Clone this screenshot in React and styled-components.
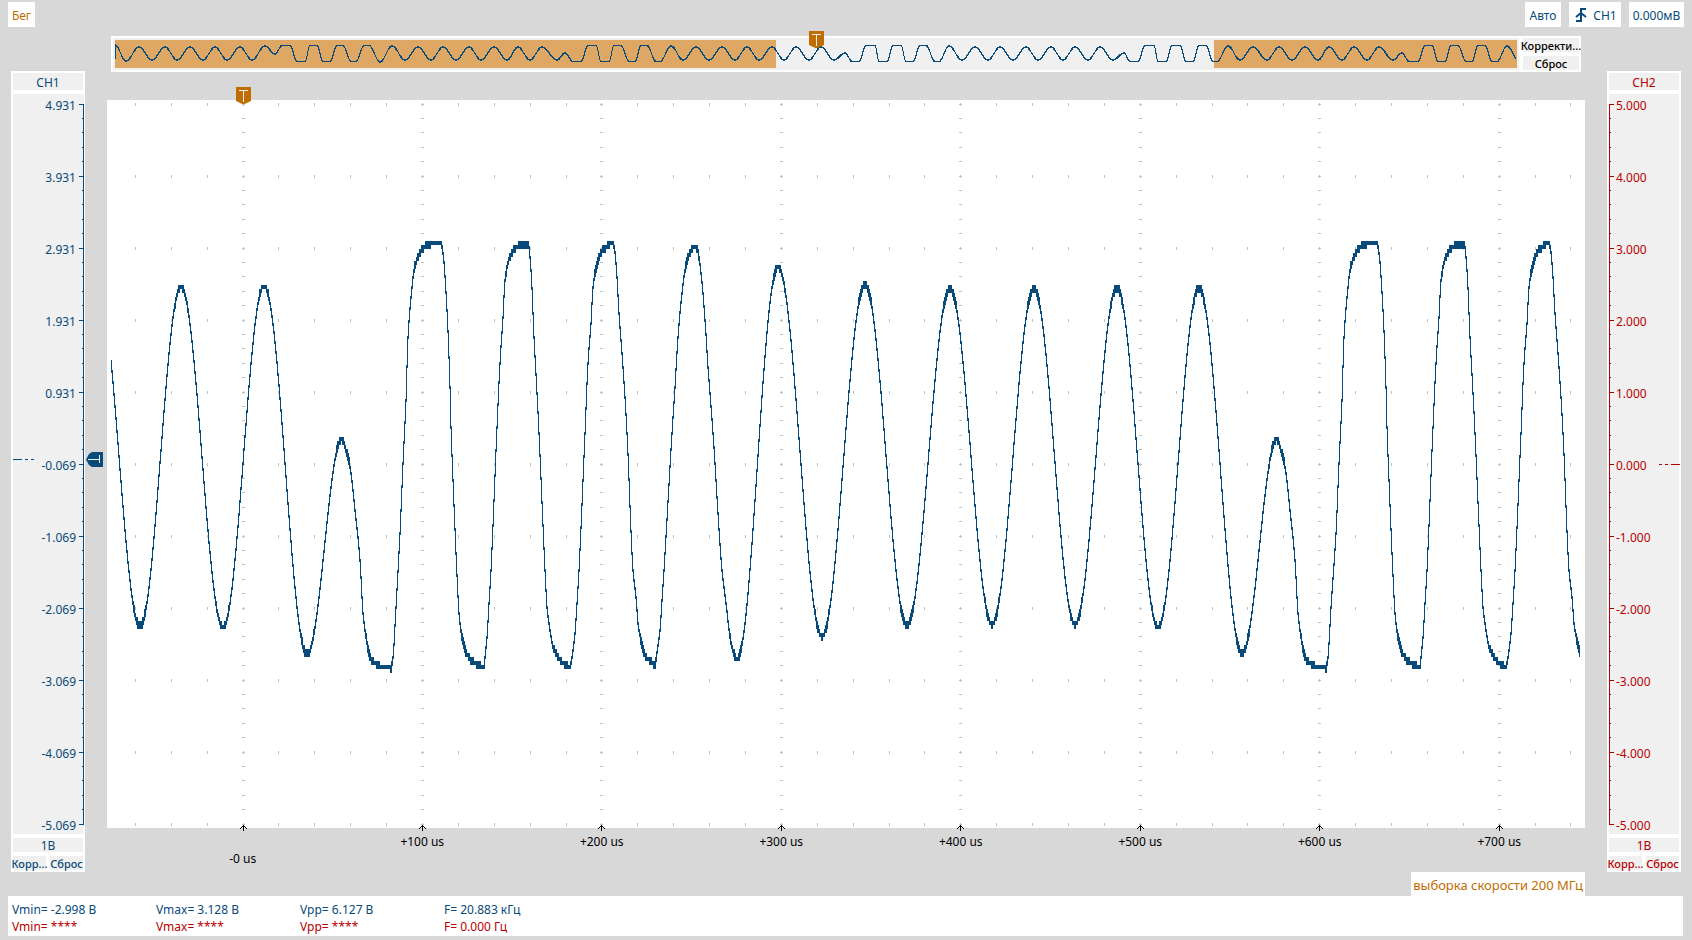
import React from "react";
import styled, { createGlobalStyle } from "styled-components";

const BLUE = "#084a7a";
const RED = "#b80000";
const ORANGE = "#bf6c00";

const GlobalStyle = createGlobalStyle`
  *, *::before, *::after { box-sizing: border-box; }
  body {
    margin: 0;
    background: #d8d8d8;
    font-family: "Noto Sans", "Open Sans", sans-serif;
    font-size: 12px;
    line-height: 16px;
    color: #000;
  }
  button { font: inherit; border: 0; padding: 0; cursor: pointer; }
`;

const Page = styled.div`
  min-height: 100vh;
  padding: 2px 8px 4px;
`;

const TopBar = styled.header`
  display: flex;
  justify-content: space-between;
  height: 25px;
`;

const TriggerGroup = styled.div`
  display: flex;
  gap: 8px;
`;

const StatusButton = styled.button`
  display: flex;
  align-items: center;
  justify-content: center;
  gap: 5px;
  min-width: ${(p) => p.$width}px;
  height: 25px;
  padding: 2px 2px 0;
  background: #fff;
  color: ${(p) => p.$color || BLUE};
`;

const Workspace = styled.main`
  display: grid;
  grid-template-columns: 74px minmax(0, 1fr) 74px;
  column-gap: 22px;
  padding: 9px 3px 0;
`;

const ChannelPanel = styled.section`
  position: relative;
  display: flex;
  flex-direction: column;
  gap: 4px;
  margin: 35px 0 24px;
  padding: 2px;
  background: #fff;
  color: ${(p) => p.$color};
`;

const PanelButton = styled.button`
  flex: ${(p) => (p.$fill ? "1 1 0" : "none")};
  min-width: 0;
  height: ${(p) => p.$height}px;
  padding-top: 2px;
  display: flex;
  align-items: center;
  justify-content: center;
  background: #f0f0f0;
  color: inherit;
  white-space: nowrap;
  font-size: ${(p) => (p.$small ? 11 : 12)}px;
  font-weight: ${(p) => (p.$small ? 500 : 400)};
`;

const ButtonPair = styled.div`
  display: flex;
  gap: 4px;
`;

const Scale = styled.div`
  display: flex;
  flex-direction: ${(p) => (p.$mirrored ? "row-reverse" : "row")};
  justify-content: flex-end;
  gap: ${(p) => (p.$mirrored ? 2 : 3)}px;
  height: 740px;
  margin-right: ${(p) => (p.$mirrored ? 0 : -1)}px;
  background: #f0f0f0;
`;

const ScaleLabels = styled.ol`
  display: flex;
  flex-direction: column;
  justify-content: space-between;
  margin: 0;
  padding: 4px 0 0;
  list-style: none;
  text-align: ${(p) => (p.$mirrored ? "left" : "right")};
`;

const ScaleTicks = styled.svg`
  flex: none;
  width: 5px;
  height: 740px;
  transform: ${(p) => (p.$mirrored ? "scaleX(-1)" : "none")};
`;

const ZeroDash = styled.svg`
  position: absolute;
  top: ${(p) => p.$top}px;
  left: ${(p) => (p.$mirrored ? "auto" : "2px")};
  right: ${(p) => (p.$mirrored ? "1px" : "auto")};
  width: 21px;
  height: 1px;
  transform: ${(p) => (p.$mirrored ? "scaleX(-1)" : "none")};
`;

const LevelHandle = styled.svg`
  position: absolute;
  top: 381px;
  left: 75px;
  width: 17px;
  height: 15px;
`;

const Center = styled.section`
  min-width: 0;
`;

const Overview = styled.div`
  display: flex;
  gap: 4px;
  height: 36px;
  margin: 0 4px 28px;
  padding: 2px;
  background: #fff;
`;

const OverviewTrack = styled.div`
  position: relative;
  flex: 1;
  min-width: 0;
  background: #f0f0f0;
`;

const OverviewChart = styled.svg`
  display: block;
  width: 100%;
  height: 32px;
`;

const OverviewButtons = styled.div`
  display: flex;
  flex-direction: column;
  justify-content: space-between;
  width: 56px;
`;

const Flag = styled.svg`
  position: absolute;
  top: ${(p) => p.$top}px;
  left: ${(p) => p.$left}%;
  width: 15px;
  height: 17px;
  margin-left: -7px;
`;

const Plot = styled.div`
  position: relative;
  height: 728px;
  background: #fff;
`;

const PlotChart = styled.svg`
  display: block;
  width: 100%;
  height: 728px;
  overflow: visible;
`;

const TimeAxis = styled.ol`
  display: grid;
  grid-template-columns: 460fr repeat(8, 1795fr);
  height: 44px;
  margin: 0 -4px 0 0;
  padding: 6px 0 5px;
  list-style: none;
  text-align: center;
`;

const TimeLabel = styled.li`
  grid-column: ${(p) => p.$column};
  grid-row: 1;
  align-self: ${(p) => (p.$low ? "end" : "start")};
`;

const SampleRate = styled.div`
  width: fit-content;
  height: 24px;
  margin-left: auto;
  padding: 0 2px;
  background: #fff;
  color: ${ORANGE};
  font-size: 13px;
  line-height: 27px;
`;

const Measurements = styled.table`
  display: block;
  height: 40px;
  margin-right: 1px;
  padding: 5px 4px 0;
  border-spacing: 0;
  background: #fff;
`;

const MeasureRow = styled.tr`
  color: ${(p) => p.$color};
`;

const MeasureCell = styled.td`
  width: 144px;
  min-width: 144px;
  padding: 0;
  line-height: 17px;
`;

/* Signal knots: [x, y, traced]. Plain knots are joined by half a cosine, traced ones by a monotone cubic. */
const line = (pairs) => pairs.map(([x, y]) => [x, y, true]);

const LEAD = [[98, 287], [140, 626], [181, 287], [223, 627], [264, 286], [307, 654]];

const BURST = [
  [342, 439],
  ...line([
    [346, 450], [350, 467], [355, 510], [360, 560], [363, 613], [367, 643], [371, 659], [377, 664], [382, 667], [391, 668],
    [393, 657], [396, 607], [400, 533], [403, 463], [406, 400], [408, 337], [412, 287], [414, 270], [418, 257],
    [422, 249], [428, 245], [434, 243], [441, 243], [443, 253], [447, 310], [450, 387], [451, 427], [454, 505], [457, 575],
    [459, 613], [462, 637], [466, 652], [472, 661], [479, 665], [484, 667], [485, 657], [487, 637], [489, 603], [491, 570],
    [497, 427], [500, 363], [503, 317], [505, 280], [508, 262], [513, 251], [517, 247], [523, 244], [528, 244],
    [531, 270], [534, 337], [537, 393], [539, 433], [545, 570], [547, 607], [550, 630], [553, 647], [558, 657],
    [562, 662], [566, 665], [570, 667], [572, 657], [575, 633], [577, 603], [579, 570],
    [585, 433], [588, 363], [591, 323], [593, 287], [597, 265], [600, 254], [605, 248], [612, 243], [614, 246],
    [616, 263], [619, 313], [623, 367], [627, 433], [633, 570], [636, 597], [638, 623], [642, 645], [646, 657],
    [653, 663], [655, 665], [657, 652], [660, 630], [662, 600], [664, 570],
  ]),
];

const MIDDLE = [
  ...line([
    [672, 433], [675, 387], [678, 337], [682, 293], [685, 270], [688, 257], [695, 246], [697, 248], [701, 273],
    [705, 320], [708, 367], [713, 433], [722, 570], [726, 603], [730, 637], [733, 651], [737, 659],
  ]),
  [778, 267], [822, 636], [865, 285], [907, 625], [950, 289], [992, 624], [1034, 289],
  [1075, 624], [1117, 288], [1158, 627], [1199, 288], [1242, 653],
];

const PERIOD = 936;
const SIGNAL = [...LEAD, ...BURST, ...MIDDLE, ...BURST.map(([x, y, s]) => [x + PERIOD - (x < 400 ? 1 : 0), y, s])];

function slopes(knots) {
  const secant = (i) => (knots[i + 1][1] - knots[i][1]) / (knots[i + 1][0] - knots[i][0]);
  return knots.map((k, i) => {
    if (i === 0 || i === knots.length - 1) return 0;
    const a = secant(i - 1);
    const b = secant(i);
    return a * b <= 0 ? 0 : (2 * a * b) / (a + b);
  });
}

function sampler(knots) {
  const m = slopes(knots);
  return (x) => {
    let i = 1;
    while (i < knots.length - 1 && knots[i][0] < x) i += 1;
    const [x0, y0] = knots[i - 1];
    const [x1, y1, traced] = knots[i];
    const h = x1 - x0;
    const t = Math.min(1, Math.max(0, (x - x0) / h));
    if (!traced) return y0 + ((y1 - y0) * (1 - Math.cos(Math.PI * t))) / 2;
    const u = 1 - t;
    return (1 + 2 * t) * u * u * y0 + t * u * u * h * m[i - 1] + t * t * (3 - 2 * t) * y1 - t * t * u * h * m[i];
  };
}

/* One vertical bar per pixel column, snapped to the converter's steps. */
function columns(knots, from, to, step, noise) {
  const at = sampler(knots);
  let d = "";
  for (let x = from; x < to; x += 1) {
    const a = at(x);
    const b = at(x + 1);
    const steep = Math.abs(a - b) > step * 1.5;
    const n = steep ? noise / 2 : noise;
    const top = Math.min(a, b) - n;
    const bottom = Math.max(a, b) + n;
    const y0 = steep ? Math.round(top) : Math.round((top - 1) / step) * step + 1;
    const y1 = steep ? Math.round(bottom) : Math.round((bottom - 1) / step) * step + 1;
    d += `M${x} ${y0}h1V${Math.max(y1, y0 + 1)}h-1z`;
  }
  return d;
}

const hi = 45.5;
const lo = 61.5;
const flat = (y, pairs) => pairs.flatMap(([a, b]) => [[a, y], [b, y, true]]);
const swing = (xs, first, other) => xs.map((x, i) => [x, i % 2 ? other : first]);

const OVERVIEW = [
  [115, 45], [126, 61], ...swing([139, 152, 165, 177, 190, 203, 215, 227, 240, 252], 47, 60), [265, 46], [275, 54],
  ...flat(hi, [[282, 290]]), ...flat(lo, [[297, 305]]), ...flat(hi, [[310, 317]]), ...flat(lo, [[323, 330]]),
  ...flat(hi, [[337, 343]]), ...flat(lo, [[351, 356]]), ...flat(hi, [[364, 369]]), [380, 62], [392, 46],
  ...swing([405, 418, 431, 443, 456, 469, 481, 494, 507, 518, 530, 542], 60, 47), [557, 60], [565, 53],
  ...flat(lo, [[573, 581]]), ...flat(hi, [[588, 596]]), ...flat(lo, [[601, 609]]), ...flat(hi, [[614, 621]]),
  ...flat(lo, [[629, 635]]), ...flat(hi, [[641, 647]]), ...flat(lo, [[656, 660]]), [671, 46],
  ...swing([683, 696, 709, 722, 735, 747, 759, 772, 784, 796, 809, 821, 834], 60, 47), [845, 53],
  ...flat(lo, [[852, 859]]), ...flat(hi, [[866, 875]]), ...flat(lo, [[879, 887]]), ...flat(hi, [[893, 901]]),
  ...flat(lo, [[906, 913]]), ...flat(hi, [[920, 926]]), ...flat(lo, [[935, 939]]), [949, 46],
  ...swing([962, 975, 988, 1000, 1013, 1026, 1038, 1051, 1063, 1075, 1088, 1100, 1113], 60, 47), [1124, 53],
  ...flat(lo, [[1130, 1138]]), ...flat(hi, [[1145, 1154]]), ...flat(lo, [[1158, 1166]]), ...flat(hi, [[1172, 1180]]),
  ...flat(lo, [[1186, 1193]]), ...flat(hi, [[1199, 1206]]), ...flat(lo, [[1213, 1217]]), [1228, 46],
  ...swing([1240, 1253, 1267, 1279, 1292, 1305, 1318, 1329, 1342, 1354, 1367, 1379, 1393], 60, 47), [1402, 53],
  ...flat(lo, [[1409, 1418]]), ...flat(hi, [[1425, 1432]]), ...flat(lo, [[1438, 1445]]), ...flat(hi, [[1451, 1458]]),
  ...flat(lo, [[1466, 1472]]), ...flat(hi, [[1478, 1485]]), ...flat(lo, [[1492, 1497]]), [1507, 46], [1519, 61],
];

const WAVE_PATH = columns(SIGNAL, 111, 1580, 4, 3);
const OVERVIEW_PATH = `M115 45h1v14h-1z${columns(OVERVIEW, 115, 1516, 1, 0.6)}`;

const MAJOR_X = Array.from({ length: 8 }, (_, i) => Math.floor(243 + i * 179.45));
const MINOR_X = Array.from({ length: 41 }, (_, i) => i - 3)
  .filter((i) => i % 5 !== 0 && i < 38)
  .map((i) => Math.floor(243 + i * 35.89));

function gridPath() {
  let d = "";
  for (let r = 0; r <= 10; r += 1) {
    const y = 104 + r * 72;
    MINOR_X.forEach((x) => { d += `M${x} ${y - 1}h1v3h-1z`; });
    MAJOR_X.forEach((x) => {
      d += `M${x} ${y - 1}h1v3h-1zM${x - 1} ${y}h3v1h-3z`;
      if (r < 10) [14, 28, 43, 57].forEach((s) => { d += `M${x - 1} ${y + s}h3v1h-3z`; });
    });
  }
  return d;
}

const GRID_PATH = gridPath();
const ARROW_PATH = MAJOR_X.map((x) => `M${x} 825h1v6h-1zM${x - 1} 826h3v1h-3zM${x - 2} 827h1v1h-1zM${x + 2} 827h1v1h-1zM${x - 3} 828h1v1h-1zM${x + 3} 828h1v1h-1z`).join("");

function ticksPath() {
  let d = "M4 10h1v721h-1z";
  for (let r = 0; r <= 10; r += 1) {
    const y = 10 + r * 72;
    d += `M0 ${y}h5v1h-5z`;
    if (r < 10) [14, 28, 43, 57].forEach((s) => { d += `M3 ${y + s}h1v1h-1z`; });
  }
  return d;
}

const TICKS_PATH = ticksPath();

function TriggerFlag({ top, left }) {
  return (
    <Flag $top={top} $left={left} viewBox="0 0 15 17" aria-hidden="true">
      <path d="M0 0h15v14l-7.500 3.500L0 14z" fill={ORANGE} />
      <path d="M3 3h9v1H3zM7 3h1v12H7z" fill="#f0f0f0" shapeRendering="crispEdges" />
    </Flag>
  );
}

function Channel({ name, color, labels, mirrored, dashTop, children }) {
  return (
    <ChannelPanel $color={color} aria-label={name}>
      <PanelButton $height={17}>{name}</PanelButton>
      <Scale $mirrored={mirrored}>
        <ScaleLabels $mirrored={mirrored}>
          {labels.map((l) => <li key={l}>{l}</li>)}
        </ScaleLabels>
        <ScaleTicks $mirrored={mirrored} viewBox="0 0 5 740" shapeRendering="crispEdges" aria-hidden="true">
          <path d={TICKS_PATH} fill={color} />
        </ScaleTicks>
      </Scale>
      <PanelButton $height={14}>1В</PanelButton>
      <ButtonPair>
        <PanelButton $height={14} $fill $small>Корр...</PanelButton>
        <PanelButton $height={14} $fill $small>Сброс</PanelButton>
      </ButtonPair>
      <ZeroDash $top={dashTop} $mirrored={mirrored} viewBox="0 0 21 1" shapeRendering="crispEdges" aria-hidden="true">
        <path d="M0 0h9v1H0zM12 0h3v1h-3zM18 0h3v1h-3z" fill={color} />
      </ZeroDash>
      {children}
    </ChannelPanel>
  );
}

const CH1_LABELS = ["4.931", "3.931", "2.931", "1.931", "0.931", "-0.069", "-1.069", "-2.069", "-3.069", "-4.069", "-5.069"];
const CH2_LABELS = ["5.000", "4.000", "3.000", "2.000", "1.000", "0.000", "-1.000", "-2.000", "-3.000", "-4.000", "-5.000"];
const TIMES = ["-0 us", "+100 us", "+200 us", "+300 us", "+400 us", "+500 us", "+600 us", "+700 us"];
const MEASURES = [
  { color: BLUE, values: ["Vmin= -2.998 В", "Vmax= 3.128 В", "Vpp= 6.127 В", "F= 20.883 кГц"] },
  { color: RED, values: ["Vmin= ****", "Vmax= ****", "Vpp= ****", "F= 0.000 Гц"] },
];

export default function App() {
  return (
    <>
      <GlobalStyle />
      <Page>
        <TopBar>
          <StatusButton $width={27} $color={ORANGE}>Бег</StatusButton>
          <TriggerGroup>
            <StatusButton $width={36}>Авто</StatusButton>
            <StatusButton $width={52}>
              <svg width="15" height="15" viewBox="0 0 15 15" aria-hidden="true">
                <path d="M3 13H8V1H13M3 9L8 5L13 9" fill="none" stroke={BLUE} strokeWidth="2" />
              </svg>
              CH1
            </StatusButton>
            <StatusButton $width={55}>0.000мВ</StatusButton>
          </TriggerGroup>
        </TopBar>

        <Workspace>
          <Channel name="CH1" color={BLUE} labels={CH1_LABELS} dashTop={388}>
            <LevelHandle viewBox="0 0 17 15" aria-hidden="true">
              <path d="M0 7.500L3 2L6 0H17V15H6L3 13z" fill={BLUE} />
              <path d="M2 7h12v1H2zM13 3h1v8h-1z" fill="#f0f0f0" shapeRendering="crispEdges" />
            </LevelHandle>
          </Channel>

          <Center>
            <Overview>
              <OverviewTrack>
                <OverviewChart viewBox="113 38 1406 32" preserveAspectRatio="none" shapeRendering="crispEdges" role="img" aria-label="CH1">
                  <path d="M115 40H776V68H115zM1214 40H1517V68H1214z" fill="#dea864" />
                  <path d={OVERVIEW_PATH} fill={BLUE} />
                </OverviewChart>
                <TriggerFlag top={-7} left={50} />
              </OverviewTrack>
              <OverviewButtons>
                <PanelButton $height={14} $small>Корректи...</PanelButton>
                <PanelButton $height={14} $small>Сброс</PanelButton>
              </OverviewButtons>
            </Overview>

            <Plot>
              <PlotChart viewBox="107 100 1478 728" preserveAspectRatio="none" shapeRendering="crispEdges" role="img" aria-label="CH1">
                <path d={GRID_PATH} fill="#c0c0c0" />
                <path d={ARROW_PATH} fill="#000" />
                <path d={WAVE_PATH} fill={BLUE} />
              </PlotChart>
              <TriggerFlag top={-13} left={9.2} />
            </Plot>

            <TimeAxis>
              {TIMES.map((t, i) => <TimeLabel key={t} $column={i + 2} $low={i === 0}>{t}</TimeLabel>)}
            </TimeAxis>
            <SampleRate>выборка скорости 200 МГц</SampleRate>
          </Center>

          <Channel name="CH2" color={RED} labels={CH2_LABELS} mirrored dashTop={393} />
        </Workspace>

        <Measurements>
          <tbody>
            {MEASURES.map((row) => (
              <MeasureRow key={row.color} $color={row.color}>
                {row.values.map((v) => <MeasureCell key={v}>{v}</MeasureCell>)}
              </MeasureRow>
            ))}
          </tbody>
        </Measurements>
      </Page>
    </>
  );
}
